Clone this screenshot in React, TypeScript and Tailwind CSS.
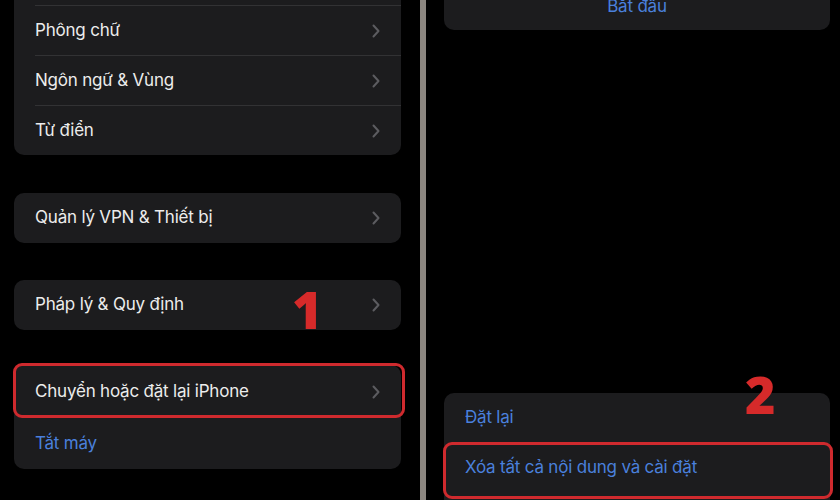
import type { ReactNode } from "react"

const FONT = { fontFamily: "Inter, 'Noto Sans', sans-serif" }

function Chevron() {
  return (
    <svg width="8" height="14" viewBox="0 0 8 14" className="shrink-0">
      <polyline points="1.5,1.5 6.5,7 1.5,12.5" fill="none" stroke="#5c5c60" strokeWidth="2" strokeLinecap="round" strokeLinejoin="round" />
    </svg>
  )
}

function Row({ label, sep, blue, chevron = true, h = "h-[50px]" }: { label: string; sep?: boolean; blue?: boolean; chevron?: boolean; h?: string }) {
  return (
    <div className={`${h} flex items-center pl-[21px]`}>
      <div className={`flex-1 h-full flex items-center pr-[21px] ${sep ? "border-t border-[#323234]" : ""}`}>
        <span className={`flex-1 text-[17px] tracking-[-0.2px] ${blue ? "text-[#4a80dc]" : "text-[#ececec]"}`}>{label}</span>
        {chevron && <Chevron />}
      </div>
    </div>
  )
}

function Card({ children, className = "" }: { children: ReactNode; className?: string }) {
  return <div className={`bg-[#1c1c1e] rounded-[10px] shrink-0 ${className}`}>{children}</div>
}

function RedBox({ className }: { className: string }) {
  return <div className={`absolute border-[3px] border-[#cf2a2e] rounded-[9px] pointer-events-none ${className}`} />
}

export default function App() {
  return (
    <div className="w-[840px] h-[500px] bg-black flex overflow-hidden relative" style={FONT}>
      <div className="w-[420px] px-[14px] pr-[19px] flex flex-col">
        <Card className="-mt-[45px]">
          <Row label="" chevron={false} />
          <Row label="Phông chữ" sep />
          <Row label="Ngôn ngữ & Vùng" sep />
          <Row label="Từ điển" sep />
        </Card>
        <Card className="mt-[38px]">
          <Row label="Quản lý VPN & Thiết bị" />
        </Card>
        <Card className="mt-[37px]">
          <Row label="Pháp lý & Quy định" />
        </Card>
        <Card className="mt-[35px]">
          <div className="relative">
            <Row label="Chuyển hoặc đặt lại iPhone" h="h-[54px]" />
            <RedBox className="-left-[1px] -right-[4px] -top-[2px] bottom-[1px]" />
          </div>
          <Row label="Tắt máy" blue chevron={false} />
        </Card>
      </div>

      <div className="w-[6px] bg-[#8b8680]" />

      <div className="flex-1 pl-[18px] pr-[10px] flex flex-col">
        <Card className="-mt-[16px] h-[46px] flex items-center justify-center">
          <span className="text-[17px] text-[#4a80dc] tracking-[-0.2px]">Bắt đầu</span>
        </Card>
        <Card className="mt-[363px] h-[120px]">
          <Row label="Đặt lại" blue chevron={false} />
          <div className="relative">
            <Row label="Xóa tất cả nội dung và cài đặt" blue chevron={false} />
            <RedBox className="-left-[1px] -right-[3px] -top-[1px] bottom-[-6px]" />
          </div>
        </Card>
      </div>

      <span className="absolute left-[292px] top-[283px] text-[52px] leading-none font-extrabold text-[#d62a2a]" style={{ fontFamily: "'Open Sans', sans-serif" }}>1</span>
      <span className="absolute left-[745px] top-[368px] text-[52px] leading-none font-extrabold text-[#d62a2a]" style={{ fontFamily: "'Open Sans', sans-serif" }}>2</span>
    </div>
  )
}
